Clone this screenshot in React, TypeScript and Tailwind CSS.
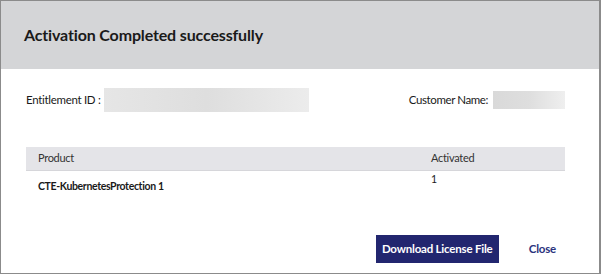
import React from 'react';

const App: React.FC = () => {
  return (
    <div
      className="w-[601px] h-[274px] bg-white border border-[#8b8b8b] border-r-2 flex flex-col text-[#1a1a1a]"
      style={{ fontFamily: 'Lato, "Noto Sans", sans-serif' }}
    >
      <header className="h-[68px] bg-[#d4d5d7] flex items-center pl-[23px]">
        <h1 className="text-[16px] font-bold tracking-[-0.15px]">Activation Completed successfully</h1>
      </header>

      <div className="flex items-center justify-between pl-[25px] pr-[34px] mt-[19px] h-[24px]">
        <div className="flex items-center text-[11.5px] tracking-[-0.3px]">
          <span>Entitlement ID :</span>
          <div className="ml-[3px] w-[205px] h-[24px] bg-gradient-to-r from-[#e6e6e6] via-[#dedede] to-[#ececec]" />
        </div>
        <div className="flex items-center text-[11.5px] tracking-[-0.4px]">
          <span>Customer Name:</span>
          <div className="ml-[5px] w-[72px] h-[18px] bg-gradient-to-r from-[#d9d9d9] via-[#dedede] to-[#efefef]" />
        </div>
      </div>

      <div className="ml-[25px] mr-[34px] mt-[35px]">
        <div className="h-[24px] bg-[#e4e4e8] border-b border-[#d6d6da] flex items-center text-[11px] tracking-[-0.3px] text-[#333]">
          <div className="pl-[12px] w-[405px]">Product</div>
          <div>Activated</div>
        </div>
        <div className="flex text-[10.5px]">
          <div className="pl-[12px] w-[405px] pt-[8px] font-bold tracking-[-0.35px]">CTE-KubernetesProtection 1</div>
          <div className="pt-[1px]">1</div>
        </div>
      </div>

      <div className="flex-1 flex items-end justify-end pr-[43px] pb-[10px]">
        <button className="h-[28px] w-[123px] bg-[#22266f] text-white text-[11.5px] font-bold tracking-[-0.2px] whitespace-nowrap">
          Download License File
        </button>
        <button className="ml-[30px] h-[28px] text-[#2c337d] text-[11.5px] font-bold tracking-[-0.2px]">Close</button>
      </div>
    </div>
  );
};

export default App;
